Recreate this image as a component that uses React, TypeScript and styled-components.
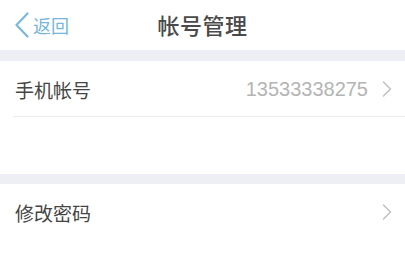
import React from "react";
import styled, { createGlobalStyle } from "styled-components";

const Global = createGlobalStyle`
  html, body { margin: 0; padding: 0; background: #ffffff; }
  body { font-family: "Noto Sans CJK SC", "Noto Sans", "Liberation Sans", sans-serif; }
`;

const Page = styled.div`
  width: 405px;
  height: 270px;
  background: #ffffff;
  display: flex;
  flex-direction: column;
  overflow: hidden;
`;

const Header = styled.header`
  height: 50px;
  display: grid;
  grid-template-columns: 1fr auto 1fr;
  align-items: center;
  padding: 0 15px;
  box-sizing: border-box;
`;

const Back = styled.div`
  display: flex;
  align-items: center;
  gap: 4px;
  color: #74b6dc;
  font-size: 18px;
  line-height: 1;
`;

const Title = styled.div`
  font-size: 22px;
  color: #4a4a4a;
  font-weight: 500;
  line-height: 1;
  letter-spacing: 0.5px;
  margin-top: -2px;
`;

const Band = styled.div<{ $h: number }>`
  height: ${(p) => p.$h}px;
  background: #eeeff4;
`;

const Row = styled.div<{ $h: number; $divider?: boolean }>`
  height: ${(p) => p.$h}px;
  display: flex;
  align-items: center;
  padding: 0 13px 0 15px;
  position: relative;
  box-sizing: border-box;
  ${(p) =>
    p.$divider
      ? `&::after { content: ""; position: absolute; left: 13px; right: 0; bottom: 0; height: 1px; background: #ececee; }`
      : ""}
`;

const Label = styled.div`
  flex: 1;
  font-size: 19px;
  color: #454545;
  line-height: 1;
`;

const Value = styled.div`
  font-family: "Liberation Sans", Arial, sans-serif;
  font-size: 20px;
  color: #b4b4b4;
  margin-right: 14px;
  line-height: 1;
`;

const Empty = styled.div<{ $h: number }>`
  height: ${(p) => p.$h}px;
`;

const BackIcon = () => (
  <svg width="14" height="26" viewBox="0 0 14 26">
    <polyline points="12.5,1.5 1.5,13 12.5,24.5" fill="none" stroke="#7ab8dc" strokeWidth="2.2" strokeLinecap="round" strokeLinejoin="round" />
  </svg>
);

const Chevron = () => (
  <svg width="10" height="16" viewBox="0 0 10 16">
    <polyline points="1.5,1 8.5,8 1.5,15" fill="none" stroke="#c2c2c2" strokeWidth="1.6" strokeLinecap="round" strokeLinejoin="round" />
  </svg>
);

export default function App() {
  return (
    <Page>
      <Global />
      <Header>
        <Back>
          <BackIcon />
          <span>返回</span>
        </Back>
        <Title>帐号管理</Title>
        <div />
      </Header>
      <Band $h={11} />
      <Row $h={56} $divider>
        <Label>手机帐号</Label>
        <Value>13533338275</Value>
        <Chevron />
      </Row>
      <Empty $h={57} />
      <Band $h={10} />
      <Row $h={56}>
        <Label>修改密码</Label>
        <Chevron />
      </Row>
    </Page>
  );
}
